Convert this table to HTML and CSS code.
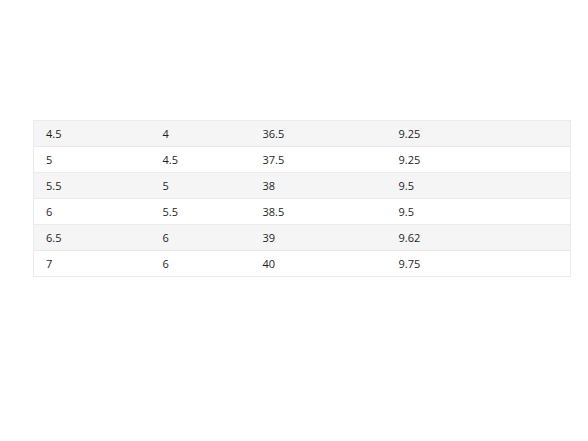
FILE: index.html
```html
<!DOCTYPE html>
<html>
<head>
<meta charset="utf-8">
<link rel="stylesheet" href="styles.css">
</head>
<body>
<div class="wrap">
<table class="sizes">
<colgroup><col class="c1"><col class="c2"><col class="c3"><col class="c4"></colgroup>
<tbody>
<tr><td>4.5</td><td>4</td><td>36.5</td><td>9.25</td></tr>
<tr><td>5</td><td>4.5</td><td>37.5</td><td>9.25</td></tr>
<tr><td>5.5</td><td>5</td><td>38</td><td>9.5</td></tr>
<tr><td>6</td><td>5.5</td><td>38.5</td><td>9.5</td></tr>
<tr><td>6.5</td><td>6</td><td>39</td><td>9.62</td></tr>
<tr><td>7</td><td>6</td><td>40</td><td>9.75</td></tr>
</tbody>
</table>
</div>
</body>
</html>
```
FILE: styles.css
```css
html, body { margin: 0; padding: 0; background: #fff; }
.wrap { padding: 120px 18px 0 33px; }
.sizes {
  width: 537px;
  border-collapse: collapse;
  table-layout: fixed;
  font-family: "Open Sans", sans-serif;
  font-size: 11px;
  color: #1e1e1e;
  border: 1px solid #ebebeb;
}
.c1 { width: 117px; }
.c2 { width: 100px; }
.c3 { width: 136px; }
.c4 { width: 184px; }
.sizes td {
  height: 25px;
  padding: 0 0 0 12px;
  border-bottom: 1px solid #ebebeb;
  vertical-align: middle;
}
.sizes tr:nth-child(odd) td { background: #f5f5f5; }
```
